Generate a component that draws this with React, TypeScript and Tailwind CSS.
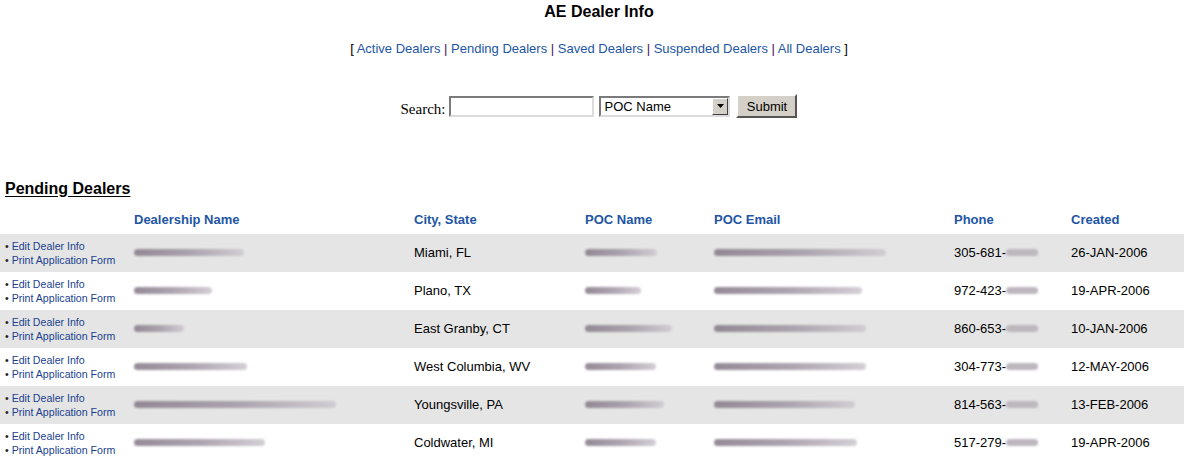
import React from "react";

type Dealer = {
  nameW: number;
  city: string;
  pocW: number;
  emailW: number;
  phone: string;
  created: string;
};

const DEALERS: Dealer[] = [
  { nameW: 110, city: "Miami, FL", pocW: 72, emailW: 172, phone: "305-681-", created: "26-JAN-2006" },
  { nameW: 78, city: "Plano, TX", pocW: 56, emailW: 148, phone: "972-423-", created: "19-APR-2006" },
  { nameW: 50, city: "East Granby, CT", pocW: 87, emailW: 152, phone: "860-653-", created: "10-JAN-2006" },
  { nameW: 113, city: "West Columbia, WV", pocW: 71, emailW: 152, phone: "304-773-", created: "12-MAY-2006" },
  { nameW: 202, city: "Youngsville, PA", pocW: 79, emailW: 141, phone: "814-563-", created: "13-FEB-2006" },
  { nameW: 131, city: "Coldwater, MI", pocW: 71, emailW: 143, phone: "517-279-", created: "19-APR-2006" },
];

const GRID = "grid grid-cols-[130px_280px_171px_129px_240px_117px_1fr]";

// smudged-out private data
function Smudge({ w }: { w: number }) {
  return (
    <div
      className="h-[7px] rounded-full bg-gradient-to-r from-[#8a7f8c] via-[#a49ba7] to-[#cfcad1] blur-[1px] opacity-90"
      style={{ width: w }}
    />
  );
}

export default function App() {
  return (
    <div className="w-[1184px] min-h-[463px] bg-white font-['Liberation_Sans',Arial,sans-serif] text-[13px] text-black">
      <div className="pl-[14px]">
        <h1 className="pt-[3px] text-center text-[16px] font-bold leading-[18px]">AE Dealer Info</h1>

        <div className="mt-[20px] text-center text-[13px] leading-[16px]">
          <span>[ </span>
          <a className="text-[#2255a4]">Active Dealers</a>
          <span className="text-[#4a1060]"> | </span>
          <a className="text-[#2255a4]">Pending Dealers</a>
          <span className="text-[#4a1060]"> | </span>
          <a className="text-[#2255a4]">Saved Dealers</a>
          <span className="text-[#4a1060]"> | </span>
          <a className="text-[#2255a4]">Suspended Dealers</a>
          <span className="text-[#4a1060]"> | </span>
          <a className="text-[#2255a4]">All Dealers</a>
          <span> ]</span>
        </div>

        <div className="mt-[35px] flex items-center justify-center gap-[5px]">
          <span className="mt-[6px] font-['Liberation_Serif',serif] text-[15px]">Search:</span>
          <input className="ml-[-1px] h-[21px] w-[145px] border-2 border-t-[#7a7a7a] border-l-[#7a7a7a] border-r-[#dcdcdc] border-b-[#dcdcdc] bg-white px-1 outline-none" />
          <div className="flex h-[21px] w-[131px] items-center border-2 border-t-[#7a7a7a] border-l-[#7a7a7a] border-r-[#dcdcdc] border-b-[#dcdcdc] bg-white">
            <span className="flex-1 pl-[3px] text-[13px] leading-none">POC Name</span>
            <div className="flex h-[17px] w-[16px] items-center justify-center border border-t-white border-l-white border-r-[#404040] border-b-[#404040] bg-[#d4d0c8]">
              <svg width="7" height="4" viewBox="0 0 7 4">
                <path d="M0 0h7L3.5 4z" fill="#000" />
              </svg>
            </div>
          </div>
          <button className="ml-[1px] h-[24px] w-[61px] border-2 border-t-white border-l-white border-r-[#555] border-b-[#555] bg-[#d4d0c8] text-[13px] leading-none">
            Submit
          </button>
        </div>
      </div>

      <h2 className="mt-[59px] pl-[5px] text-[16px] font-bold leading-[18px] underline underline-offset-2">Pending Dealers</h2>

      <div className={`${GRID} mt-[9px] h-[27px] items-center font-bold text-[#2255a4]`}>
        <div />
        <div className="pl-[4px]">Dealership Name</div>
        <div className="pl-[4px]">City, State</div>
        <div className="pl-[4px]">POC Name</div>
        <div className="pl-[4px]">POC Email</div>
        <div className="pl-[4px]">Phone</div>
        <div className="pl-[4px]">Created</div>
      </div>

      {DEALERS.map((d, i) => (
        <div key={i} className={`${GRID} h-[38px] items-center ${i % 2 === 0 ? "bg-[#e5e5e5]" : "bg-white"}`}>
          <div className="pl-[5px] text-[10.6px] leading-[14px]">
            <div>
              <span className="text-[#222]">• </span>
              <span className="text-[#1a3f8f]">Edit Dealer Info</span>
            </div>
            <div>
              <span className="text-[#222]">• </span>
              <span className="text-[#1a3f8f]">Print Application Form</span>
            </div>
          </div>
          <div className="pl-[4px]">
            <Smudge w={d.nameW} />
          </div>
          <div className="pl-[4px]">{d.city}</div>
          <div className="pl-[4px]">
            <Smudge w={d.pocW} />
          </div>
          <div className="pl-[4px]">
            <Smudge w={d.emailW} />
          </div>
          <div className="flex items-center pl-[4px]">
            <span>{d.phone}</span>
            <div className="h-[7px] w-[32px] rounded-full bg-[#bdb7be] blur-[1px]" />
          </div>
          <div className="pl-[4px]">{d.created}</div>
        </div>
      ))}
    </div>
  );
}
